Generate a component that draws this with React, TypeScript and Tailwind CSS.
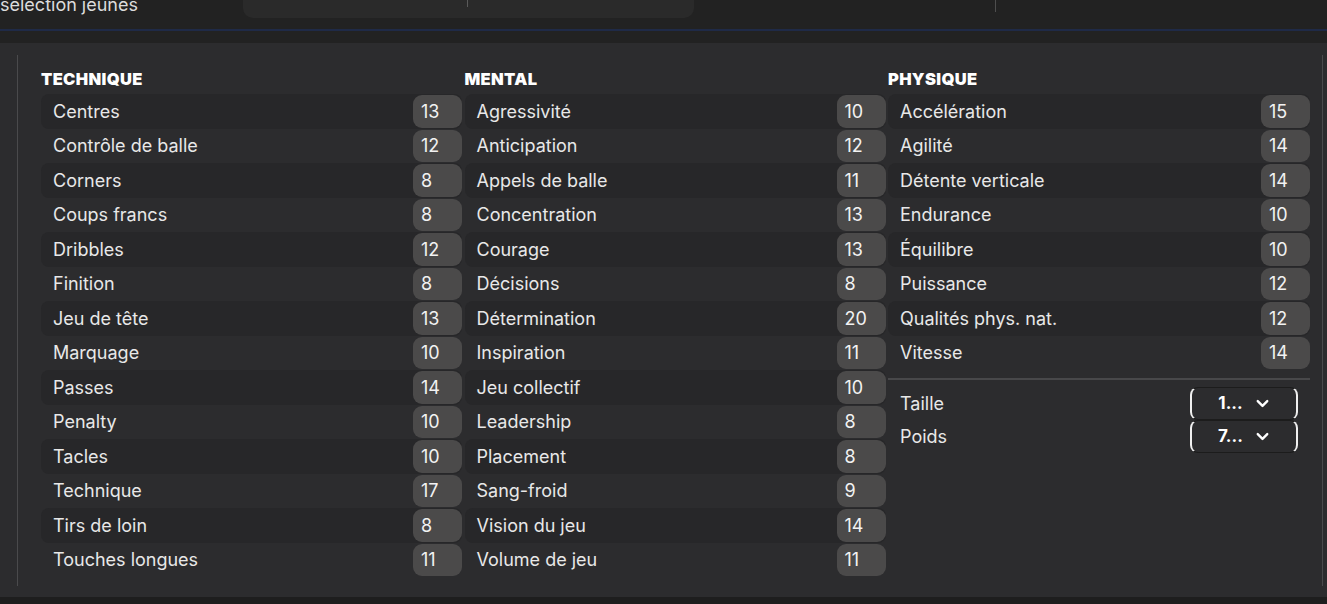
import { ChevronDown } from "lucide-react"

const technique: [string, number][] = [
  ["Centres", 13],
  ["Contrôle de balle", 12],
  ["Corners", 8],
  ["Coups francs", 8],
  ["Dribbles", 12],
  ["Finition", 8],
  ["Jeu de tête", 13],
  ["Marquage", 10],
  ["Passes", 14],
  ["Penalty", 10],
  ["Tacles", 10],
  ["Technique", 17],
  ["Tirs de loin", 8],
  ["Touches longues", 11],
]

const mental: [string, number][] = [
  ["Agressivité", 10],
  ["Anticipation", 12],
  ["Appels de balle", 11],
  ["Concentration", 13],
  ["Courage", 13],
  ["Décisions", 8],
  ["Détermination", 20],
  ["Inspiration", 11],
  ["Jeu collectif", 10],
  ["Leadership", 8],
  ["Placement", 8],
  ["Sang-froid", 9],
  ["Vision du jeu", 14],
  ["Volume de jeu", 11],
]

const physique: [string, number][] = [
  ["Accélération", 15],
  ["Agilité", 14],
  ["Détente verticale", 14],
  ["Endurance", 10],
  ["Équilibre", 10],
  ["Puissance", 12],
  ["Qualités phys. nat.", 12],
  ["Vitesse", 14],
]

function AttrRow({ label, value, index }: { label: string; value: number; index: number }) {
  return (
    <div
      className={`flex h-[34.5px] items-center rounded-[8px] ${
        index % 2 === 0 ? "bg-[#272729]" : ""
      }`}
    >
      <span className="flex-1 pl-[12px] text-[18px] text-[#e8e8e8]">{label}</span>
      <span className="flex h-[32.5px] w-[49px] items-center rounded-[9px] bg-[#4b4a4a] pl-[8px] text-[18px] text-[#f2f2f2]">
        {value}
      </span>
    </div>
  )
}

function Column({ title, rows, children }: { title: string; rows: [string, number][]; children?: React.ReactNode }) {
  return (
    <div className="flex flex-col">
      <div className="flex h-[24px] items-center text-[16.5px] font-black uppercase tracking-[0.02em] text-white">
        {title}
      </div>
      <div className="mt-[3px] flex flex-col">
        {rows.map(([label, value], i) => (
          <AttrRow key={label} label={label} value={value} index={i} />
        ))}
      </div>
      {children}
    </div>
  )
}

function Dropdown({ label, value }: { label: string; value: string }) {
  return (
    <div className="flex h-[33px] items-center">
      <span className="flex-1 pl-[12px] text-[18px] text-[#e8e8e8]">{label}</span>
      <div className="mr-[12px] flex h-[33px] w-[108px] items-center justify-center gap-[10px] rounded-[8px] border-x-2 border-y border-x-[#f0f0f0] border-y-[#1c1c1c] pl-[2px]">
        <span className="text-[17px] font-bold text-white">{value}</span>
        <ChevronDown className="h-[19px] w-[19px] text-white" strokeWidth={3} />
      </div>
    </div>
  )
}

export default function App() {
  return (
    <div
      className="flex h-[604px] w-[1327px] flex-col overflow-hidden bg-[#222222]"
      style={{ fontFamily: "Inter, 'Noto Sans', sans-serif" }}
    >
      {/* top strip, cut off */}
      <div className="flex h-[29px] items-start">
        <div className="-mt-[7px] w-[243px] text-[18px] leading-[24px] text-[#dcdcdc]">sélection jeunes</div>
        <div className="flex h-[18px] w-[451px] rounded-b-[10px] bg-[#2a2a2a]">
          <div className="ml-[224px] h-[7px] w-px bg-[#5a5a5a]" />
        </div>
        <div className="ml-[301px] h-[12px] w-px bg-[#4e4e4e]" />
      </div>
      <div className="h-[2px] bg-[#1f2a47]" />
      <div className="h-[12px]" />

      <div className="flex flex-1 flex-col bg-[#2c2c2e] pb-[11px] pl-[17px] pr-[4px] pt-[12px]">
        <div className="flex flex-1 border-x border-x-[#4a4a4c] pl-[23px] pt-[12px]">
          <div className="grid grid-cols-[421px_421px_422px] gap-x-[2.5px]">
            <Column title="Technique" rows={technique} />
            <Column title="Mental" rows={mental} />
            <Column title="Physique" rows={physique}>
              <div className="mb-[7px] mt-[8px] h-[2px] bg-[#48484a]" />
              <Dropdown label="Taille" value="1..." />
              <Dropdown label="Poids" value="7..." />
            </Column>
          </div>
        </div>
      </div>
      <div className="h-[7px] bg-[#1e1e1e]" />
    </div>
  )
}
